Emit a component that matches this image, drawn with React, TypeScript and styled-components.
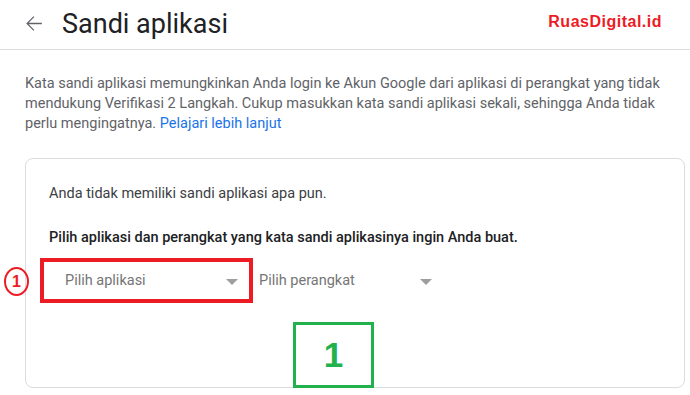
import React from "react";
import styled, { createGlobalStyle } from "styled-components";

const GlobalStyle = createGlobalStyle`
  * {
    box-sizing: border-box;
  }

  body {
    margin: 0;
    background: #fff;
    font-family: Roboto, "Noto Sans", Arial, sans-serif;
  }
`;

const Page = styled.div`
  width: 690px;
  height: 395px;
  overflow: hidden;
  background: #fff;
`;

const Header = styled.header`
  display: flex;
  align-items: center;
  height: 50px;
  padding: 0 28px 2px 21px;
  border-bottom: 1px solid #dadce0;
`;

const BackButton = styled.button`
  display: flex;
  align-items: center;
  border: 0;
  padding: 0;
  margin-right: 16px;
  background: none;
  color: #5f6368;
`;

const Title = styled.h1`
  margin: 0;
  font-size: 27px;
  font-weight: 400;
  color: #202124;
  flex: 1;
`;

const Watermark = styled.span`
  font-family: "Liberation Sans", Arial, sans-serif;
  font-weight: 700;
  font-size: 16px;
  letter-spacing: 0.5px;
  color: #ed1c24;
  margin-top: -4px;
`;

const Main = styled.main`
  padding: 24px 5px 0 25px;
`;

const Intro = styled.p`
  margin: 0;
  width: 650px;
  font-size: 14.5px;
  line-height: 20px;
  color: #5f6368;
`;

const Link = styled.a`
  color: #1a73e8;
  text-decoration: none;
`;

const Card = styled.section`
  position: relative;
  margin-top: 24px;
  height: 230px;
  padding: 25px 23px 0;
  border: 1px solid #dadce0;
  border-radius: 8px;
`;

const Text = styled.p<{ $strong?: boolean }>`
  margin: 0 0 ${(p) => (p.$strong ? "10px" : "24px")};
  font-size: 14.5px;
  line-height: 20px;
  font-weight: ${(p) => (p.$strong ? 500 : 400)};
  color: ${(p) => (p.$strong ? "#202124" : "#3c4043")};
`;

const SelectRow = styled.div`
  position: relative;
  display: flex;
  align-items: center;
`;

const Select = styled.div<{ $highlight?: boolean }>`
  display: flex;
  align-items: center;
  justify-content: space-between;
  height: 45px;
  width: ${(p) => (p.$highlight ? "213px" : "179px")};
  margin-left: ${(p) => (p.$highlight ? "-9px" : "0")};
  padding: ${(p) => (p.$highlight ? "0 11px 0 21px" : "0 0 0 6px")};
  border: ${(p) => (p.$highlight ? "4px solid #ed1c24" : "0")};
  font-size: 14.5px;
  color: #757575;
`;

const Caret = styled.span`
  width: 0;
  height: 0;
  margin-top: 2px;
  border-left: 6px solid transparent;
  border-right: 6px solid transparent;
  border-top: 6px solid #9e9e9e;
`;

const StepBadge = styled.span`
  position: absolute;
  left: -45px;
  top: 9px;
  width: 25px;
  height: 29px;
  display: flex;
  align-items: center;
  justify-content: center;
  border: 2px solid #ed1c24;
  border-radius: 50%;
  font-family: "Liberation Sans", Arial, sans-serif;
  font-weight: 700;
  font-size: 16px;
  color: #ed1c24;
`;

const StepBox = styled.div`
  position: absolute;
  left: 267px;
  top: 163px;
  width: 81px;
  height: 66px;
  display: flex;
  align-items: center;
  justify-content: center;
  border: 3px solid #22b14c;
  font-family: "Liberation Sans", Arial, sans-serif;
  font-weight: 700;
  font-size: 35px;
  color: #22b14c;
`;

const BackArrow = () => (
  <svg width="25" height="25" viewBox="0 0 24 24" fill="currentColor">
    <path d="M20 11.2H7.4l5.4-5.4L12 5l-7 7 7 7 .8-.8-5.4-5.4H20v-1.6z" />
  </svg>
);

const App = () => (
  <Page>
    <GlobalStyle />
    <Header>
      <BackButton aria-label="Kembali">
        <BackArrow />
      </BackButton>
      <Title>Sandi aplikasi</Title>
      <Watermark>RuasDigital.id</Watermark>
    </Header>
    <Main>
      <Intro>
        Kata sandi aplikasi memungkinkan Anda login ke Akun Google dari aplikasi di perangkat yang tidak
        mendukung Verifikasi 2 Langkah. Cukup masukkan kata sandi aplikasi sekali, sehingga Anda tidak
        perlu mengingatnya. <Link href="#">Pelajari lebih lanjut</Link>
      </Intro>
      <Card>
        <Text>Anda tidak memiliki sandi aplikasi apa pun.</Text>
        <Text $strong>Pilih aplikasi dan perangkat yang kata sandi aplikasinya ingin Anda buat.</Text>
        <SelectRow>
          <StepBadge>1</StepBadge>
          <Select $highlight>
            Pilih aplikasi
            <Caret />
          </Select>
          <Select>
            Pilih perangkat
            <Caret />
          </Select>
        </SelectRow>
        <StepBox>1</StepBox>
      </Card>
    </Main>
  </Page>
);

export default App;
